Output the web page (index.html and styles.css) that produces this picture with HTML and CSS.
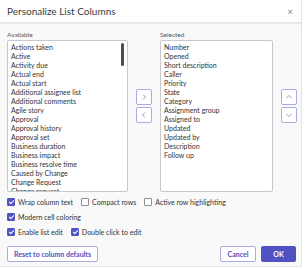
FILE: index.html
```html
<!DOCTYPE html>
<html lang="en">
<head>
  <meta charset="UTF-8">
  <title>Personalize List Columns</title>
  <link rel="stylesheet" href="styles.css">
</head>
<body>
  <div class="dialog">
    <div class="dialog-header">
      <span class="dialog-title">Personalize List Columns</span>
      <span class="close">&times;</span>
    </div>
    <div class="dialog-body">
      <div class="columns">
        <div class="col col-available">
          <div class="col-label">Available</div>
          <div class="listbox">
            <ul class="items">
              <li>Actions taken</li>
              <li>Active</li>
              <li>Activity due</li>
              <li>Actual end</li>
              <li>Actual start</li>
              <li>Additional assignee list</li>
              <li>Additional comments</li>
              <li>Agile story</li>
              <li>Approval</li>
              <li>Approval history</li>
              <li>Approval set</li>
              <li>Business duration</li>
              <li>Business impact</li>
              <li>Business resolve time</li>
              <li>Caused by Change</li>
              <li>Change Request</li>
              <li>Change request</li>
            </ul>
            <div class="scrollbar"><div class="thumb"></div></div>
          </div>
        </div>
        <div class="move-buttons">
          <button class="icon-btn">
            <svg width="8" height="8" viewBox="0 0 8 8"><path d="M3 1.5 L5.5 4 L3 6.5" fill="none" stroke="#8a8dd6" stroke-width="0.9"/></svg>
          </button>
          <button class="icon-btn">
            <svg width="8" height="8" viewBox="0 0 8 8"><path d="M5 1.5 L2.5 4 L5 6.5" fill="none" stroke="#8a8dd6" stroke-width="0.9"/></svg>
          </button>
        </div>
        <div class="col col-selected">
          <div class="col-label">Selected</div>
          <div class="listbox">
            <ul class="items">
              <li>Number</li>
              <li>Opened</li>
              <li>Short description</li>
              <li>Caller</li>
              <li>Priority</li>
              <li>State</li>
              <li>Category</li>
              <li>Assignment group</li>
              <li>Assigned to</li>
              <li>Updated</li>
              <li>Updated by</li>
              <li>Description</li>
              <li>Follow up</li>
            </ul>
          </div>
        </div>
        <div class="move-buttons">
          <button class="icon-btn">
            <svg width="8" height="8" viewBox="0 0 8 8"><path d="M1.5 5 L4 2.5 L6.5 5" fill="none" stroke="#8a8dd6" stroke-width="0.9"/></svg>
          </button>
          <button class="icon-btn">
            <svg width="8" height="8" viewBox="0 0 8 8"><path d="M1.5 3 L4 5.5 L6.5 3" fill="none" stroke="#8a8dd6" stroke-width="0.9"/></svg>
          </button>
        </div>
      </div>

      <div class="options">
        <div class="option-row">
          <label class="check"><span class="box checked"></span>Wrap column text</label>
          <label class="check"><span class="box"></span>Compact rows</label>
          <label class="check"><span class="box"></span>Active row highlighting</label>
        </div>
        <div class="option-row">
          <label class="check"><span class="box checked"></span>Modern cell coloring</label>
        </div>
        <div class="option-row">
          <label class="check"><span class="box checked"></span>Enable list edit</label>
          <label class="check"><span class="box checked"></span>Double click to edit</label>
        </div>
      </div>

      <div class="footer">
        <button class="btn">Reset to column defaults</button>
        <div class="footer-right">
          <button class="btn btn-cancel">Cancel</button>
          <button class="btn btn-primary">OK</button>
        </div>
      </div>
    </div>
  </div>
</body>
</html>
```

FILE: styles.css
```css
body {
  margin: 0;
  padding: 0;
  background-color: #ffffff;
  font-family: Lato, "Open Sans", Arial, sans-serif;
  color: #2e2e2e;
}

.dialog {
  width: 302px;
  height: 267px;
  background-color: #f9f9fa;
  border-right: 1px solid #e6e6e6;
  border-bottom: 1px solid #e6e6e6;
  box-sizing: border-box;
}

.dialog-header {
  height: 22px;
  display: flex;
  align-items: center;
  justify-content: space-between;
  padding: 0 8px 0 7px;
  background-color: #ffffff;
  border-bottom: 1px solid #e4e4e8;
  box-shadow: 0 1px 1px rgba(0, 0, 0, 0.05);
}

.dialog-title {
  font-size: 10px;
  color: #3a3a3a;
}

.close {
  font-size: 10px;
  color: #888888;
}

.dialog-body {
  padding: 7px 4px 0 7px;
}

.columns {
  display: flex;
  align-items: flex-start;
}

.col-label {
  font-size: 6.5px;
  color: #555555;
  height: 10px;
  line-height: 9px;
}

.col-available .listbox {
  width: 121px;
}

.col-selected .listbox {
  width: 113px;
}

.listbox {
  height: 152px;
  background-color: #ffffff;
  border: 1px solid #c8c8d0;
  border-radius: 2px;
  box-sizing: border-box;
  display: flex;
  overflow: hidden;
}

.items {
  list-style: none;
  margin: 0;
  padding: 2px 0 0 3px;
  flex: 1;
  font-size: 7px;
  line-height: 9px;
  color: #333333;
}

.items li {
  white-space: nowrap;
}

.scrollbar {
  width: 6px;
  padding-top: 2px;
}

.thumb {
  width: 3px;
  height: 23px;
  background-color: #4e4e52;
  border-radius: 2px;
}

.move-buttons {
  display: flex;
  flex-direction: column;
  gap: 2px;
  margin: 59px 8px 0 8px;
}

.icon-btn {
  width: 16px;
  height: 16px;
  padding: 0;
  border: 1px solid #a9abe3;
  border-radius: 2px;
  background-color: #ffffff;
  display: flex;
  align-items: center;
  justify-content: center;
}

.options {
  margin-top: 5px;
  display: flex;
  flex-direction: column;
  gap: 6px;
}

.option-row {
  display: flex;
  gap: 8px;
}

.check {
  display: flex;
  align-items: center;
  gap: 3px;
  font-size: 7px;
  color: #333333;
  height: 9px;
}

.box {
  width: 8px;
  height: 8px;
  box-sizing: border-box;
  border: 1px solid #8e8e96;
  border-radius: 1px;
  background-color: #ffffff;
  position: relative;
}

.box.checked {
  background-color: #4f52c0;
  border-color: #4f52c0;
}

.box.checked::after {
  content: "";
  position: absolute;
  left: 2px;
  top: 0px;
  width: 2px;
  height: 4px;
  border: solid #ffffff;
  border-width: 0 1px 1px 0;
  transform: rotate(45deg);
}

.footer {
  margin-top: 10px;
  display: flex;
  justify-content: space-between;
  padding-right: 1px;
}

.footer-right {
  display: flex;
  gap: 5px;
}

.btn {
  height: 16px;
  padding: 0 6px;
  font-family: Lato, Arial, sans-serif;
  font-size: 7px;
  font-weight: bold;
  color: #4f52c0;
  background-color: #ffffff;
  border: 1px solid #a9abe3;
  border-radius: 2px;
}

.btn-cancel {
  width: 36px;
  padding: 0;
}

.btn-primary {
  width: 35px;
  color: #ffffff;
  background-color: #4f52c0;
  border-color: #4f52c0;
}
```
